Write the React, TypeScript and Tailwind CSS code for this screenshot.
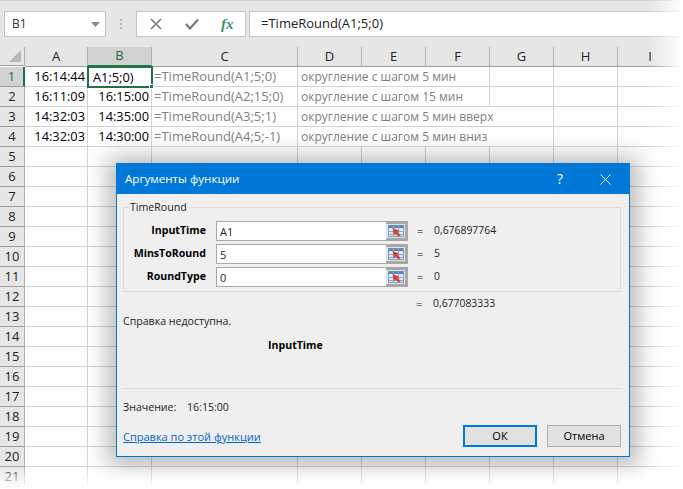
import React from "react";

const cols = ["A", "B", "C", "D", "E", "F", "G", "H", "I"];
const rows = Array.from({ length: 21 }, (_, i) => i + 1);
const FONT = "font-['Open_Sans','Noto_Sans',sans-serif]";

const data: Record<number, { a: string; b: string; c: string; d: string; span: number }> = {
  1: { a: "16:14:44", b: "", c: "=TimeRound(A1;5;0)", d: "округление с шагом 5 мин", span: 3 },
  2: { a: "16:11:09", b: "16:15:00", c: "=TimeRound(A2;15;0)", d: "округление с шагом 15 мин", span: 3 },
  3: { a: "14:32:03", b: "14:35:00", c: "=TimeRound(A3;5;1)", d: "округление с шагом 5 мин вверх", span: 4 },
  4: { a: "14:32:03", b: "14:30:00", c: "=TimeRound(A4;5;-1)", d: "округление с шагом 5 мин вниз", span: 4 },
};

function RefIcon() {
  return (
    <svg width="16" height="14" viewBox="0 0 16 14">
      <rect x="0.5" y="1.5" width="15" height="11" fill="#dfe8f5" stroke="#7f9cc4" strokeWidth="1" />
      <rect x="0.5" y="1.5" width="15" height="2.5" fill="#5b85b8" />
      <path d="M0 7.5H16M0 10.5H16M5.5 2V13M10.5 2V13" stroke="#8aa5cb" strokeWidth="1" />
      <path d="M4.5 4L11 6.5L9.5 8L12.5 11L10.5 12.5L7.5 9.5L6 11Z" fill="#d8402c" />
    </svg>
  );
}

function ArgRow({ label, value, result }: { label: string; value: string; result: string }) {
  return (
    <div className="flex h-[20px] items-center">
      <div className="w-[82px] text-right text-[10.6px] font-bold text-black">{label}</div>
      <div className="ml-[10px] flex h-[20px] w-[192px] border border-[#a8a8a8]">
        <div className="flex-1 bg-white pl-[3px] text-[11px] leading-[19px] text-[#222]">{value}</div>
        <div className="flex w-[21px] items-center justify-center border-[2px] border-l-0 border-[#a8a8a8] bg-[#e1e1e1]">
          <RefIcon />
        </div>
      </div>
      <div className="ml-[9px] w-[17px] text-[11px] text-black">=</div>
      <div className="text-[10.4px] text-[#222]">{result}</div>
    </div>
  );
}

function Dialog() {
  return (
    <div className="absolute left-[116px] top-[163px] flex h-[294px] w-[514px] flex-col border border-[#0078d7] bg-[#efefef] shadow-[0_2px_22px_8px_rgba(0,0,0,0.28)]">
      <div className="flex h-[30px] shrink-0 items-center bg-[#0078d7] pl-[8px] text-white">
        <span className="text-[11.6px]">Аргументы функции</span>
        <span className="ml-auto mr-[37px] text-[14px] leading-none">?</span>
        <svg className="mr-[18px]" width="11" height="11" viewBox="0 0 11 11">
          <path d="M0.5 0.5L10.5 10.5M10.5 0.5L0.5 10.5" stroke="#fff" strokeWidth="1" />
        </svg>
      </div>
      <div className="flex flex-1 flex-col px-[6px]">
        <div className="relative mt-[13px] h-[85px] w-[498px] border border-[#dcdcdc] pt-[13px]">
          <span className="absolute -top-[8px] left-[5px] bg-[#efefef] px-[1px] text-[10.6px] leading-[14px] text-[#222]">TimeRound</span>
          <div className="flex flex-col gap-[3px]">
            <ArgRow label="InputTime" value="A1" result="0,676897764" />
            <ArgRow label="MinsToRound" value="5" result="5" />
            <ArgRow label="RoundType" value="0" result="0" />
          </div>
        </div>
        <div className="mt-[4px] flex h-[16px] items-center pl-[293px] text-[#222]">
          <span className="w-[17px] text-[11px]">=</span>
          <span className="text-[10.4px]">0,677083333</span>
        </div>
        <div className="mt-[1px] h-[16px] text-[10.6px] leading-[16px] text-[#222]">Справка недоступна.</div>
        <div className="mt-[8px] pl-[145px] text-[10.6px] font-bold leading-[16px] text-black">InputTime</div>
        <div className="mt-[35px] h-px w-[498px] bg-[#d9d9d9]" />
        <div className="mt-[11px] flex h-[16px] items-center text-[10.6px] text-[#222]">
          <span className="w-[64px]">Значение:</span>
          <span>16:15:00</span>
        </div>
        <div className="mt-[9px] flex w-[498px] items-start justify-between">
          <span className="mt-[4px] text-[11px] leading-[15px] text-[#0066cc] underline">Справка по этой функции</span>
          <div className="flex gap-[10px]">
            <div className="flex h-[22px] w-[74px] items-center justify-center border-[2px] border-[#0078d7] bg-[#e1e1e1] text-[11px] text-black">ОК</div>
            <div className="flex h-[22px] w-[74px] items-center justify-center border border-[#adadad] bg-[#e1e1e1] text-[11px] text-black">Отмена</div>
          </div>
        </div>
      </div>
    </div>
  );
}

function Toolbar() {
  return (
    <div className="flex h-[47px] items-start border-t border-t-[#d0d0d0] bg-[#e6e6e6] pl-[4px] pt-[10px]">
      <div className="flex h-[26px] w-[102px] items-center border border-[#c6c6c6] bg-white pl-[7px] text-[12px] text-[#333]">
        <span>B1</span>
        <svg className="ml-auto mr-[5px]" width="9" height="5" viewBox="0 0 9 5">
          <path d="M0 0H9L4.5 5Z" fill="#8a8a8a" />
        </svg>
      </div>
      <div className="flex h-[26px] w-[30px] flex-col items-center justify-center gap-[2px]">
        <i className="block h-[2px] w-[2px] bg-[#b0b0b0]" />
        <i className="block h-[2px] w-[2px] bg-[#b0b0b0]" />
        <i className="block h-[2px] w-[2px] bg-[#b0b0b0]" />
      </div>
      <div className="flex h-[26px] w-[110px] items-center border border-[#c6c6c6] bg-white pl-[13px]">
        <svg width="12" height="12" viewBox="0 0 12 12">
          <path d="M1 1L11 11M11 1L1 11" stroke="#7a7a7a" strokeWidth="1.6" />
        </svg>
        <svg className="ml-[23px]" width="14" height="12" viewBox="0 0 14 12">
          <path d="M1 6L5 10.5L13 1.5" fill="none" stroke="#7a7a7a" strokeWidth="2.2" />
        </svg>
        <span className="ml-[22px] font-['Liberation_Serif',serif] text-[15px] font-bold italic leading-none text-[#3f9060]">fx</span>
      </div>
      <div className="ml-[3px] flex h-[26px] flex-1 items-center border border-[#c6c6c6] bg-white pl-[11px] text-[13px] text-[#222]">
        =TimeRound(A1;5;0)
      </div>
    </div>
  );
}

function Sheet() {
  const line = "border-b border-r border-[#d4d4d4]";
  const head = "flex items-center justify-center border-b border-r border-b-[#9e9e9e] border-r-[#b0b0b0] bg-[#e6e6e6] text-[13px] text-[#222]";
  return (
    <div className="grid grid-cols-[25px_63px_64px_146px_64px_64px_64px_64px_64px_65px] auto-rows-[20px] bg-white">
      <div className="relative h-[19px] border-b border-r border-b-[#9e9e9e] border-r-[#b0b0b0] bg-[#e6e6e6]">
        <svg className="absolute bottom-[3px] right-[3px]" width="12" height="12" viewBox="0 0 12 12">
          <path d="M12 0V12H0Z" fill="#b8b8b8" />
        </svg>
      </div>
      {cols.map((c) => (
        <div key={c} className={c === "B" ? "flex items-center justify-center border-b-[2px] border-r border-b-[#217346] border-r-[#b0b0b0] bg-[#d2d2d2] text-[13px] text-[#217346]" : head}>
          {c}
        </div>
      ))}
      {rows.map((r) => {
        const d = data[r];
        const rowHead =
          r === 1
            ? "flex items-center justify-center border-b border-r-[2px] border-b-[#9e9e9e] border-r-[#217346] bg-[#d2d2d2] text-[13px] text-[#217346]"
            : head;
        if (d) {
          return (
            <React.Fragment key={r}>
              <div className={rowHead}>{r}</div>
              <div className={`${line} pr-[2px] text-right text-[12.8px] leading-[19px] text-black`}>{d.a}</div>
              {r === 1 ? (
                <div className="relative -ml-px -mt-px h-[22px] w-[66px] border-[2px] border-[#217346] bg-white pl-[4px] text-[12.8px] leading-[19px] text-black">
                  A1;5;0)
                  <span className="absolute bottom-[-3px] right-[-3px] h-[5px] w-[5px] border border-white bg-[#217346]" />
                </div>
              ) : (
                <div className={`${line} pr-[2px] text-right text-[12.8px] leading-[19px] text-black`}>{d.b}</div>
              )}
              <div className={`${line} pl-[2px] text-[13px] leading-[19px] text-[#7f7f7f]`}>{d.c}</div>
              <div className={`${line} ${d.span === 3 ? "col-span-3" : "col-span-4"} pl-[3px] text-[12px] leading-[19px] text-[#7f7f7f]`}>{d.d}</div>
              {Array.from({ length: 6 - d.span }, (_, i) => (
                <div key={i} className={line} />
              ))}
            </React.Fragment>
          );
        }
        return (
          <React.Fragment key={r}>
            <div className={rowHead}>{r}</div>
            {cols.map((c) => (
              <div key={c} className={line} />
            ))}
          </React.Fragment>
        );
      })}
    </div>
  );
}

export default function App() {
  return (
    <div className={`relative h-[489px] w-[683px] overflow-hidden bg-white ${FONT}`}>
      <Toolbar />
      <Sheet />
      <Dialog />
      <div className="absolute inset-y-0 right-0 w-[34px] bg-gradient-to-r from-transparent to-white" />
      <div className="absolute inset-x-0 bottom-0 h-[24px] bg-gradient-to-b from-transparent to-white" />
    </div>
  );
}
